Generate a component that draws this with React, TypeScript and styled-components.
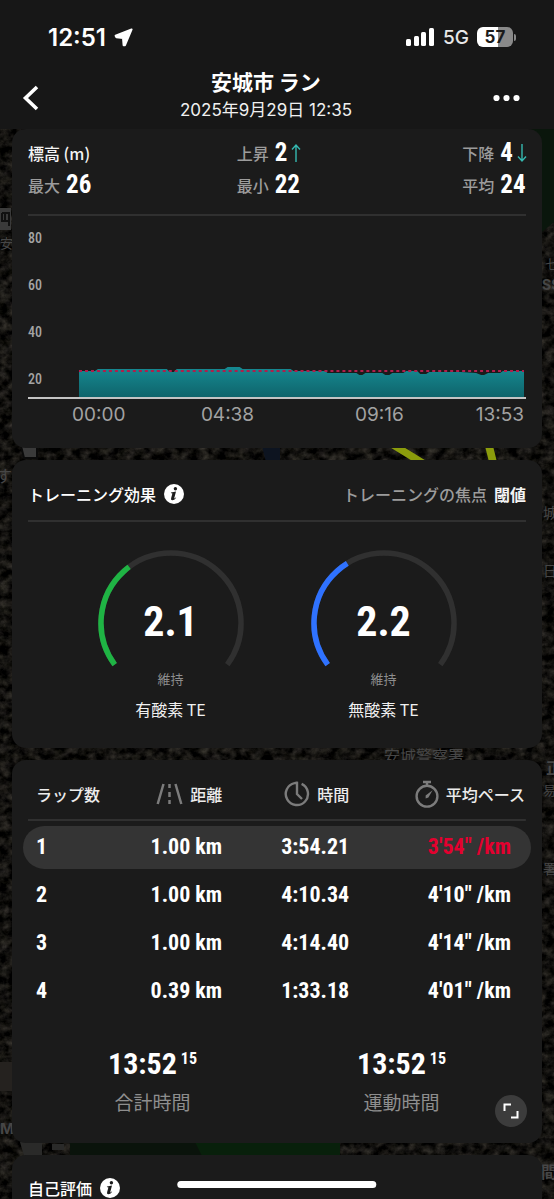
import React from "react";
import styled, { createGlobalStyle } from "styled-components";

const sans = `Inter, "Noto Sans CJK JP", sans-serif`;
const cjk = `"Noto Sans CJK JP", sans-serif`;
const condensed = `"Roboto Condensed", "Liberation Sans Narrow", sans-serif`;

const GlobalStyle = createGlobalStyle`
  * { box-sizing: border-box; }
  html, body { margin: 0; background: #0d0c0b; }
  body { color: #fff; font-family: ${cjk}; -webkit-font-smoothing: antialiased; }
  button { border: 0; padding: 0; background: none; color: inherit; font: inherit; cursor: pointer; }
  svg { display: block; }
`;

const Page = styled.div`
  position: relative;
  min-height: 100vh;
  display: flex;
  flex-direction: column;
  overflow: hidden;
`;

const MapBackdrop = styled.svg`
  position: absolute;
  inset: 0;
  width: 100%;
  height: 100%;
`;

const Header = styled.header`
  position: relative;
  height: 129px;
  background: #171717;
`;

const StatusBar = styled.div`
  display: flex;
  justify-content: space-between;
  align-items: center;
  height: 74px;
  padding: 0 38px 0 48px;
  font-family: ${sans};
`;

const StatusGroup = styled.div`
  display: flex;
  align-items: center;
  gap: 8px;
`;

const Clock = styled.span`
  font-size: 24px;
  font-weight: 600;
`;

const Network = styled.span`
  font-size: 19px;
  font-weight: 500;
  color: #e8e8e8;
`;

const BatteryWrap = styled.span`
  display: flex;
  align-items: center;
  gap: 1px;
  &::after {
    content: "";
    width: 2px;
    height: 7px;
    border-radius: 0 2px 2px 0;
    background: #8a8a8a;
  }
`;

const Battery = styled.span<{ $level: number }>`
  width: 36px;
  height: 20px;
  border-radius: 6px;
  background: linear-gradient(90deg, #fff ${(p) => p.$level}%, #8a8a8a ${(p) => p.$level}%);
  color: #1a1a1a;
  font-size: 17px;
  font-weight: 700;
  line-height: 20px;
  text-align: center;
`;

const TitleBar = styled.div`
  display: flex;
  justify-content: space-between;
  align-items: center;
  height: 48px;
  padding: 0 34px 0 22px;
`;

const IconButton = styled.button`
  display: flex;
  align-items: center;
  justify-content: center;
  height: 32px;
`;

const TitleText = styled.div`
  text-align: center;
  margin-top: -4px;
`;

const Title = styled.h1`
  margin: 0;
  font-size: 21px;
  font-weight: 700;
  line-height: 28px;
`;

const DateLine = styled.p`
  margin: 0;
  font-family: ${sans};
  font-size: 17px;
  line-height: 30px;
  color: #f0f0f0;
`;

const Cards = styled.main`
  position: relative;
  flex: 1;
  display: flex;
  flex-direction: column;
  gap: 12px;
  padding: 0 12px;
`;

const Card = styled.section<{ $last?: boolean }>`
  position: relative;
  padding: 0 16px;
  border-radius: ${(p) => (p.$last ? "14px 14px 0 0" : "14px")};
  background: #1b1b1b;
  flex: ${(p) => (p.$last ? "1" : "none")};
`;

const Stats = styled.div`
  display: grid;
  grid-template-columns: 209fr 226fr auto;
  row-gap: 4px;
  padding: 10px 0 15px;
  border-bottom: 2px solid #303030;
`;

const Stat = styled.div`
  display: flex;
  align-items: center;
  gap: 6px;
  height: 28px;
  white-space: nowrap;
`;

const StatLabel = styled.span<{ $strong?: boolean }>`
  font-size: 16px;
  font-weight: 500;
  line-height: 24px;
  color: ${(p) => (p.$strong ? "#f4f4f4" : "#9c9c9c")};
`;

const StatValue = styled.span`
  font-family: ${condensed};
  font-size: 25px;
  font-weight: 700;
  line-height: 28px;
`;

const TrendArrow = styled.svg`
  margin: 0 -1px 0 -2px;
`;

const Chart = styled.div`
  display: flex;
  border-bottom: 2px solid #c4c4c4;
`;

const YAxis = styled.div`
  display: flex;
  flex-direction: column;
  gap: 29px;
  width: 51px;
  padding: 13px 0 9px;
  font-family: ${condensed};
  font-size: 14px;
  font-weight: 500;
  line-height: 18px;
  color: #a4a4a4;
`;

const Plot = styled.div`
  flex: 1;
  display: flex;
  align-items: flex-end;
  padding-right: 2px;
`;

const XAxis = styled.div`
  display: grid;
  grid-template-columns: 128fr 153fr 120fr auto;
  padding: 3px 2px 20px 44px;
  font-family: ${sans};
  font-size: 19px;
  line-height: 26px;
  color: #a2a2a2;
`;

const CardHeading = styled.div`
  display: flex;
  justify-content: space-between;
  align-items: center;
  height: 62px;
  padding-top: 8px;
  border-bottom: 2px solid #303030;
`;

const HeadingLabel = styled.h2`
  display: flex;
  align-items: center;
  gap: 8px;
  margin: 0;
  font-size: 16px;
  font-weight: 500;
  line-height: 24px;
`;

const Focus = styled.p`
  margin: 0;
  display: flex;
  gap: 7px;
  font-size: 16px;
  font-weight: 500;
  line-height: 24px;
  color: #9c9c9c;
  strong { color: #f4f4f4; font-weight: 700; }
`;

const Gauges = styled.div`
  display: flex;
  justify-content: center;
  gap: 67px;
  padding: 28px 0 24px;
`;

const GaugeBox = styled.figure`
  display: flex;
  flex-direction: column;
  align-items: center;
  margin: 0;
`;

const Dial = styled.div`
  display: grid;
  place-items: center;
  > * { grid-area: 1 / 1; }
`;

const DialValue = styled.span`
  margin-top: 26px;
  font-family: ${condensed};
  font-size: 42px;
  font-weight: 700;
  line-height: 48px;
`;

const GaugeState = styled.span`
  font-size: 13px;
  line-height: 22px;
  color: #8e8e8e;
`;

const GaugeName = styled.figcaption`
  margin-top: 4px;
  font-size: 16px;
  line-height: 30px;
  color: #f0f0f0;
`;

const LapWrap = styled.div`
  margin: 0 -5px;
  padding-top: 2px;
`;

const LapTable = styled.table`
  width: 100%;
  table-layout: fixed;
  border-collapse: separate;
  border-spacing: 0 5px;
  white-space: nowrap;
`;

const HeadRow = styled.tr`
  background: linear-gradient(#303030, #303030) center bottom / calc(100% - 10px) 2px no-repeat;
`;

const HeadCell = styled.th<{ $width: number; $pad: number; $first?: boolean }>`
  width: ${(p) => p.$width}%;
  height: 54px;
  padding: 0 ${(p) => p.$pad}px 0 ${(p) => (p.$first ? 13 : 0)}px;
  font-size: 16px;
  font-weight: 500;
  color: #ececec;
`;

const HeadContent = styled.span<{ $first?: boolean }>`
  display: flex;
  align-items: center;
  justify-content: ${(p) => (p.$first ? "flex-start" : "flex-end")};
  gap: 7px;
`;

const LapRow = styled.tr<{ $best?: boolean }>`
  td { background: ${(p) => (p.$best ? "#343434" : "transparent")}; }
  td:first-child { border-radius: 22px 0 0 22px; text-align: left; padding-left: 13px; }
  td:last-child {
    border-radius: 0 22px 22px 0;
    padding-right: 20px;
    color: ${(p) => (p.$best ? "#e4002f" : "inherit")};
  }
`;

const LapCell = styled.td`
  height: 43px;
  padding: 0 4px 2px 0;
  text-align: right;
  font-family: ${condensed};
  font-size: 22px;
  font-weight: 700;
  line-height: 28px;
`;

const Totals = styled.div`
  display: grid;
  grid-template-columns: 1fr 1fr;
  padding: 27px 0 22px;
`;

const Total = styled.div`
  display: flex;
  flex-direction: column;
  align-items: center;
`;

const TotalValue = styled.div`
  display: flex;
  gap: 4px;
  font-family: ${condensed};
  font-size: 30px;
  font-weight: 700;
  line-height: 38px;
`;

const Hundredths = styled.span`
  font-size: 16px;
  line-height: 28px;
`;

const TotalLabel = styled.div`
  font-size: 19px;
  line-height: 38px;
  color: #8e8e8e;
`;

const ExpandButton = styled.button`
  position: absolute;
  right: 15px;
  bottom: 16px;
  display: grid;
  place-items: center;
  width: 32px;
  height: 32px;
  border-radius: 50%;
  background: #3c3c3c;
`;

const RatingHeading = styled(HeadingLabel)`
  padding-top: 22px;
  height: 44px;
`;

const HomeIndicator = styled.div`
  position: fixed;
  bottom: 11px;
  left: 50%;
  width: 36%;
  height: 7px;
  border-radius: 4px;
  background: #fff;
  transform: translateX(-50%);
`;

const InfoIcon = () => (
  <svg width="20" height="20" viewBox="0 0 20 20" aria-label="info">
    <circle cx="10" cy="10" r="10" fill="#fff" />
    <circle cx="11.4" cy="4.8" r="1.7" fill="#1b1b1b" />
    <path d="M7 8.4 12 7.6 10.2 14.2Q10.1 14.9 11.8 13.4L12.2 13.8Q10.2 16.4 8.2 16.3 6.6 16.1 7.1 14.2L8.4 9.4 6.9 9.1Z" fill="#1b1b1b" />
  </svg>
);

const Arrow = ({ down }: { down?: boolean }) => (
  <TrendArrow width="10" height="20" viewBox="0 0 10 20" fill="none" stroke="#35b8b0" strokeWidth="1.4">
    <path d={down ? "M5 1V18M1 13.5 5 18 9 13.5" : "M5 19V2M1 6.5 5 2 9 6.5"} />
  </TrendArrow>
);

const RoadIcon = () => (
  <svg width="27" height="22" viewBox="0 0 27 22" stroke="#7c7c7c" strokeWidth="2.5" fill="none">
    <path d="M7.5 1 1.7 21M19.5 1 25.3 21" />
    <path d="M13.5 1V5M13.5 9V14M13.5 17V21" />
  </svg>
);

const ClockIcon = () => (
  <svg width="26" height="26" viewBox="0 0 26 26" stroke="#7c7c7c" strokeWidth="2.4" fill="none">
    <path d="M17.6 2.9A11.1 11.1 0 1 1 10.5 2.1Q12 1.7 13 1.8V13L18 18" />
  </svg>
);

const StopwatchIcon = () => (
  <svg width="24" height="28" viewBox="0 0 24 28" stroke="#7c7c7c" strokeWidth="2.4" fill="none">
    <circle cx="12" cy="16.2" r="10.4" />
    <path d="M8 2H16M12 2V6" />
    <path d="M17.6 10.2 13.4 17.6 10.6 18.4 10.6 15.6Z" fill="#7c7c7c" stroke="none" />
  </svg>
);

const ARC = "M16.7 114.6A70 70 0 1 1 129.3 114.6";

type GaugeProps = { value: string; share: number; color: string; name: string };

const Gauge = ({ value, share, color, name }: GaugeProps) => (
  <GaugeBox>
    <Dial>
      <svg width="146" height="118" viewBox="0 0 146 118" fill="none" strokeWidth="5.5">
        <path d={ARC} stroke="#303030" />
        <path d={ARC} stroke={color} pathLength={100} strokeDasharray={`${share} 100`} />
      </svg>
      <DialValue>{value}</DialValue>
    </Dial>
    <GaugeState>維持</GaugeState>
    <GaugeName>{name}</GaugeName>
  </GaugeBox>
);

const MapLayer = () => (
  <MapBackdrop viewBox="0 0 554 1199" preserveAspectRatio="xMidYMin slice" aria-hidden="true">
    <defs>
      <filter id="terrain" x="0" y="0" width="100%" height="100%" colorInterpolationFilters="sRGB">
        <feTurbulence type="fractalNoise" baseFrequency="0.11 0.13" numOctaves="4" seed="8" />
        <feColorMatrix values="0.36 0 0 0 -0.11  0.34 0.01 0 0 -0.11  0.31 0 0.02 0 -0.11  0 0 0 0 1" />
      </filter>
    </defs>
    <rect width="554" height="1199" fill="#0d0c0b" />
    <rect width="554" height="1199" filter="url(#terrain)" />
    <path d="M530 129H554V222L542 232Z" fill="#0a160c" />
    <path d="M0 208H11V230H0Z" fill="#3a3a3a" />
    <path d="M2 213H9V226M2 213V221H9M5 213V221" stroke="#111" strokeWidth="2" fill="none" />
    <path d="M21 446H37V458H24Z" fill="#3a3a3a" stroke="#0a0a0a" strokeWidth="2" />
    <path d="M388 446 402 446 428 462 414 462Z" fill="#8b9c0c" />
    <path d="M485 446 493 446 497 462 489 462Z" fill="#8b9c0c" />
    <path d="M262 446H280V462H266Z" fill="#0d1420" />
    <path d="M0 1062H12V1091H0Z" fill="#25221f" />
    <path d="M70 1140H196L204 1156H70Z" fill="#0a130b" />
    <path d="M194 1140H340V1156H202Z" fill="#08200b" />
    <path d="M20 1142H42V1156H24ZM52 1144H64V1150H52Z" fill="#2a2a29" />
    <g fill="#464646" fontFamily="Noto Sans CJK JP" fontSize="16">
      <text x="384" y="762">安城警察署</text>
      <text x="545" y="269" fontSize="13">七</text>
      <text x="542" y="290" fontFamily="Inter" fontSize="14" fontWeight="700">SS</text>
      <text x="546" y="774" fontWeight="700">正</text>
      <text x="543" y="795" fontSize="13">易署</text>
      <text x="543" y="874" fontSize="14">署</text>
      <text x="543" y="518" fontSize="14">城</text>
      <text x="543" y="576" fontSize="14">日</text>
      <text x="541" y="1178" fontWeight="700">間</text>
      <text x="-11" y="1134" fontFamily="Inter" fontSize="15" fontWeight="700">CM</text>
      <text x="0" y="248" fontSize="13">安</text>
      <text x="-4" y="482">す</text>
    </g>
  </MapBackdrop>
);

const laps = [
  { n: 1, distance: "1.00 km", time: "3:54.21", pace: "3'54\" /km", best: true },
  { n: 2, distance: "1.00 km", time: "4:10.34", pace: "4'10\" /km" },
  { n: 3, distance: "1.00 km", time: "4:14.40", pace: "4'14\" /km" },
  { n: 4, distance: "0.39 km", time: "1:33.18", pace: "4'01\" /km" },
];

const AREA =
  "M0 32V6H16L19 4H88L91 7L95 7L98 4H146L149 2H161L164 4H212L215 6H247L249 8H278L281 10H284L287 8H304L307 10H311L314 8H325L328 6H339L342 9H348L351 7H382L398 8L403 10H406L410 8H422L425 6H446V32Z";

export default function App() {
  return (
    <Page>
      <GlobalStyle />
      <MapLayer />
      <Header>
        <StatusBar>
          <StatusGroup>
            <Clock>12:51</Clock>
            <svg width="19" height="19" viewBox="0 0 19 19" fill="#fff" stroke="#fff" strokeWidth="2" strokeLinejoin="round">
              <path d="M17.6 1.4 1.6 7.8 2.4 9.2 9 9.9 9.6 17.2 11 17.2Z" />
            </svg>
          </StatusGroup>
          <StatusGroup>
            <svg width="29" height="18" viewBox="0 0 29 18" fill="#fff">
              <rect x="0" y="11" width="5" height="7" rx="1.5" />
              <rect x="8" y="8" width="5" height="10" rx="1.5" />
              <rect x="15" y="4" width="5" height="14" rx="1.5" />
              <rect x="23" y="0" width="5" height="18" rx="1.5" />
            </svg>
            <Network>5G</Network>
            <BatteryWrap>
              <Battery $level={57}>57</Battery>
            </BatteryWrap>
          </StatusGroup>
        </StatusBar>
        <TitleBar>
          <IconButton aria-label="戻る">
            <svg width="17" height="26" viewBox="0 0 17 26" fill="none" stroke="#fff" strokeWidth="3.6">
              <path d="M15 2 3.5 13 15 24" />
            </svg>
          </IconButton>
          <TitleText>
            <Title>安城市 ラン</Title>
            <DateLine>2025年9月29日 12:35</DateLine>
          </TitleText>
          <IconButton aria-label="メニュー">
            <svg width="27" height="8" viewBox="0 0 27 8" fill="#fff">
              <circle cx="3.5" cy="4" r="3.1" />
              <circle cx="13.5" cy="4" r="3.1" />
              <circle cx="23.5" cy="4" r="3.1" />
            </svg>
          </IconButton>
        </TitleBar>
      </Header>

      <Cards>
        <Card>
          <Stats>
            <Stat><StatLabel $strong>標高 (m)</StatLabel></Stat>
            <Stat><StatLabel>上昇</StatLabel><StatValue>2</StatValue><Arrow /></Stat>
            <Stat><StatLabel>下降</StatLabel><StatValue>4</StatValue><Arrow down /></Stat>
            <Stat><StatLabel>最大</StatLabel><StatValue>26</StatValue></Stat>
            <Stat><StatLabel>最小</StatLabel><StatValue>22</StatValue></Stat>
            <Stat><StatLabel>平均</StatLabel><StatValue>24</StatValue></Stat>
          </Stats>
          <Chart>
            <YAxis>
              <span>80</span>
              <span>60</span>
              <span>40</span>
              <span>20</span>
            </YAxis>
            <Plot>
              <svg width="100%" height="32" viewBox="0 0 446 32" preserveAspectRatio="none">
                <defs>
                  <linearGradient id="elevation" x1="0" y1="0" x2="0" y2="1">
                    <stop offset="0" stopColor="#168a92" />
                    <stop offset="1" stopColor="#0f646b" />
                  </linearGradient>
                </defs>
                <path d={AREA} fill="url(#elevation)" />
                <path d="M0 6H446" stroke="#b01e4c" strokeWidth="2" strokeDasharray="3 3" />
              </svg>
            </Plot>
          </Chart>
          <XAxis>
            <span>00:00</span>
            <span>04:38</span>
            <span>09:16</span>
            <span>13:53</span>
          </XAxis>
        </Card>

        <Card>
          <CardHeading>
            <HeadingLabel>トレーニング効果 <InfoIcon /></HeadingLabel>
            <Focus>トレーニングの焦点 <strong>閾値</strong></Focus>
          </CardHeading>
          <Gauges>
            <Gauge value="2.1" share={35.5} color="#1fb444" name="有酸素 TE" />
            <Gauge value="2.2" share={37.5} color="#2f72ff" name="無酸素 TE" />
          </Gauges>
        </Card>

        <Card>
          <LapWrap>
            <LapTable>
              <thead>
                <HeadRow>
                  <HeadCell $width={20} $pad={0} $first><HeadContent $first>ラップ数</HeadContent></HeadCell>
                  <HeadCell $width={20} $pad={4}><HeadContent><RoadIcon />距離</HeadContent></HeadCell>
                  <HeadCell $width={25} $pad={4}><HeadContent><ClockIcon />時間</HeadContent></HeadCell>
                  <HeadCell $width={35} $pad={6}><HeadContent><StopwatchIcon />平均ペース</HeadContent></HeadCell>
                </HeadRow>
              </thead>
              <tbody>
                {laps.map((lap) => (
                  <LapRow key={lap.n} $best={lap.best}>
                    <LapCell>{lap.n}</LapCell>
                    <LapCell>{lap.distance}</LapCell>
                    <LapCell>{lap.time}</LapCell>
                    <LapCell>{lap.pace}</LapCell>
                  </LapRow>
                ))}
              </tbody>
            </LapTable>
          </LapWrap>
          <Totals>
            <Total>
              <TotalValue>13:52<Hundredths>15</Hundredths></TotalValue>
              <TotalLabel>合計時間</TotalLabel>
            </Total>
            <Total>
              <TotalValue>13:52<Hundredths>15</Hundredths></TotalValue>
              <TotalLabel>運動時間</TotalLabel>
            </Total>
          </Totals>
          <ExpandButton aria-label="拡大">
            <svg width="16" height="16" viewBox="0 0 16 16" fill="none" stroke="#fff" strokeWidth="2">
              <path d="M1.5 8V1.5H8M8 14.5H14.5V8" />
            </svg>
          </ExpandButton>
        </Card>

        <Card $last>
          <RatingHeading>自己評価 <InfoIcon /></RatingHeading>
        </Card>
      </Cards>
      <HomeIndicator />
    </Page>
  );
}
